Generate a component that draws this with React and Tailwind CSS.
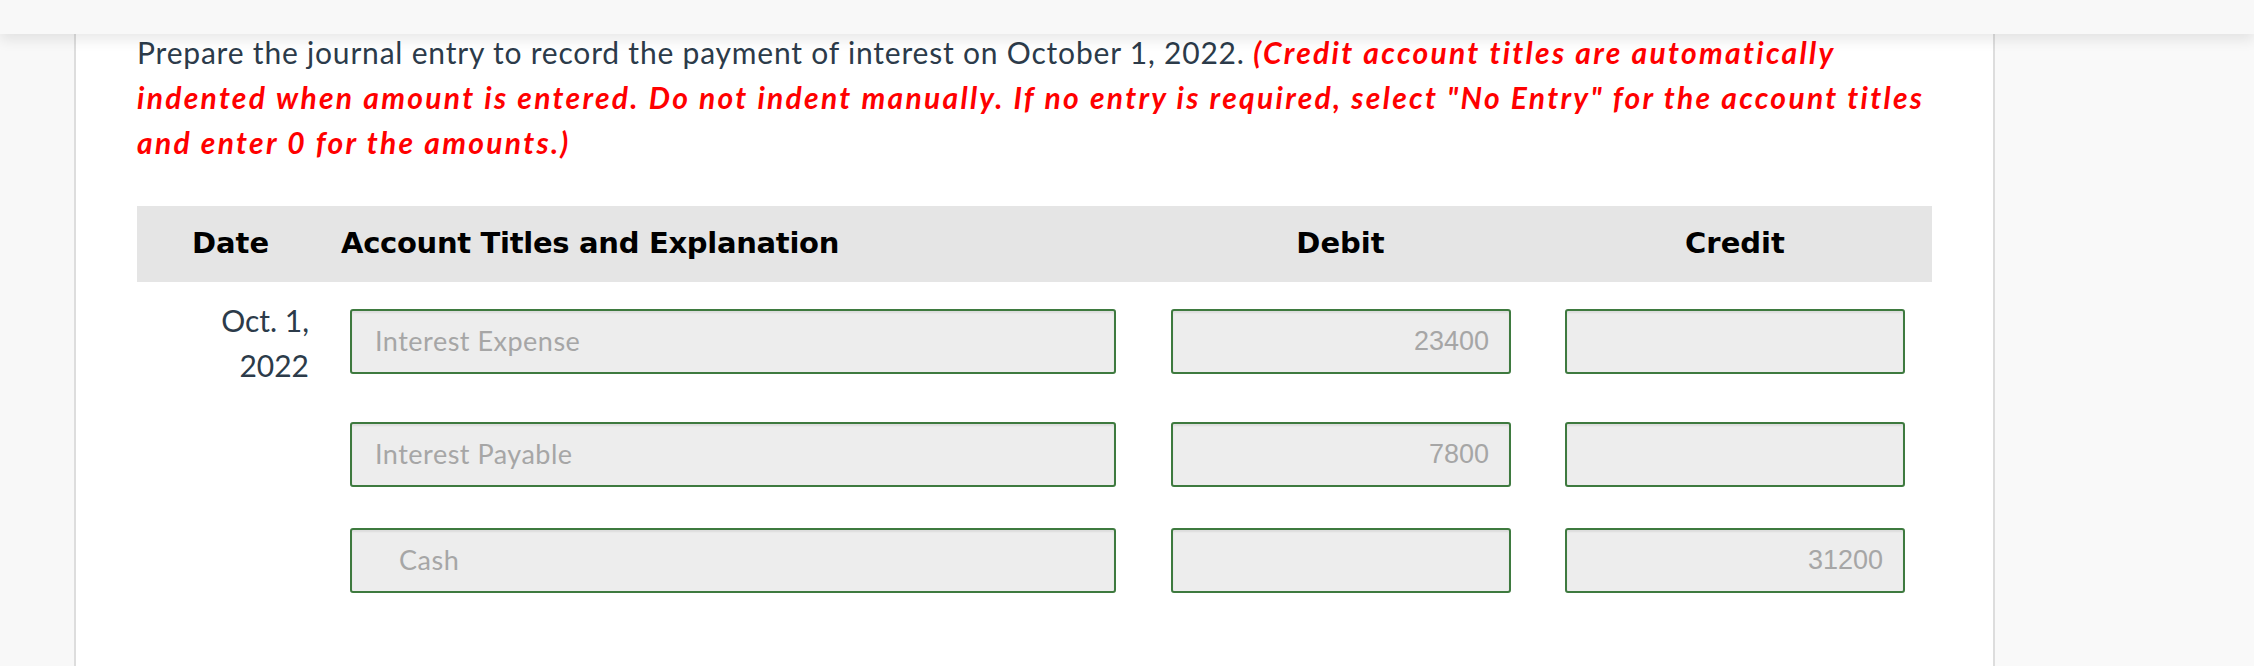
import React from 'react';

const ROWS = [
  { date: ['Oct. 1,', '2022'], account: 'Interest Expense', debit: '23400', credit: '', indent: false },
  { date: null, account: 'Interest Payable', debit: '7800', credit: '', indent: false },
  { date: null, account: 'Cash', debit: '', credit: '31200', indent: true },
];

function Field({ children, align = 'left', indent = false, mono = false }) {
  return (
    <div
      className={`h-[65px] flex items-center border-2 border-[#3e7a3f] rounded-[3px] bg-[#ededed] shadow-[inset_0_2px_2px_rgba(0,0,0,0.07)] text-[#a6a6a6] text-[27px] ${
        align === 'right' ? 'justify-end pr-[20px]' : indent ? 'pl-[47px] tracking-[0.5px]' : 'pl-[23px] tracking-[0.5px]'
      } ${mono ? "font-['Liberation_Sans',Arial,sans-serif]" : ''}`}
    >
      {children}
    </div>
  );
}

export default function App() {
  return (
    <div className="min-h-[666px] bg-white font-['Lato','Noto_Sans',sans-serif] flex flex-col">
      {/* top bar */}
      <div className="h-[34px] bg-[#f8f8f8] relative z-10 shadow-[0_6px_14px_rgba(0,0,0,0.09)]" />

      <div className="flex flex-1">
        <div className="w-[76px] bg-[#f8f8f8] border-r-2 border-[#dddddd]" />

        <div className="w-[1917px] bg-white pl-[61px] pb-[40px]">
          <p className="-mt-[4px] text-[30px] leading-[45px] text-[#2c3b4a] whitespace-nowrap tracking-[0.8px]">
            Prepare the journal entry to record the payment of interest on October 1, 2022.{' '}
            <span className="text-[#ff0000] font-bold italic tracking-[2.3px]">
              (Credit account titles are automatically
              <br />
              indented when amount is entered. Do not indent manually. If no entry is required, select "No Entry" for the account titles
              <br />
              and enter 0 for the amounts.)
            </span>
          </p>

          <div className="mt-[41px] w-[1795px]">
            {/* header */}
            <div className="h-[76px] bg-[#e5e5e5] flex items-center text-[29px] font-bold text-black mb-[6px] font-['DejaVu_Sans',sans-serif]">
              <div className="w-[187px] text-center">Date</div>
              <div className="w-[819px] pl-[17px] tracking-[-0.3px]">Account Titles and Explanation</div>
              <div className="w-[395px] text-center">Debit</div>
              <div className="w-[394px] text-center">Credit</div>
            </div>

            {ROWS.map((r, i) => (
              <div key={i} className="flex items-start">
                <div className="w-[187px] pr-[15px] pt-[10px] pb-[13px] text-right text-[30px] leading-[45px] text-[#2c3b4a]">
                  {r.date && (
                    <>
                      <div>{r.date[0]}</div>
                      <div>{r.date[1]}</div>
                    </>
                  )}
                </div>
                <div className="w-[819px] pl-[26px] pr-[27px] pt-[21px] pb-[20px]">
                  <Field indent={r.indent}>{r.account}</Field>
                </div>
                <div className="w-[395px] pl-[28px] pr-[27px] pt-[21px] pb-[20px]">
                  <Field align="right" mono>{r.debit}</Field>
                </div>
                <div className="w-[394px] px-[27px] pt-[21px] pb-[20px]">
                  <Field align="right" mono>{r.credit}</Field>
                </div>
              </div>
            ))}
          </div>
        </div>

        <div className="flex-1 bg-[#f9f9f9] border-l-2 border-[#dddddd]" />
      </div>
    </div>
  );
}
